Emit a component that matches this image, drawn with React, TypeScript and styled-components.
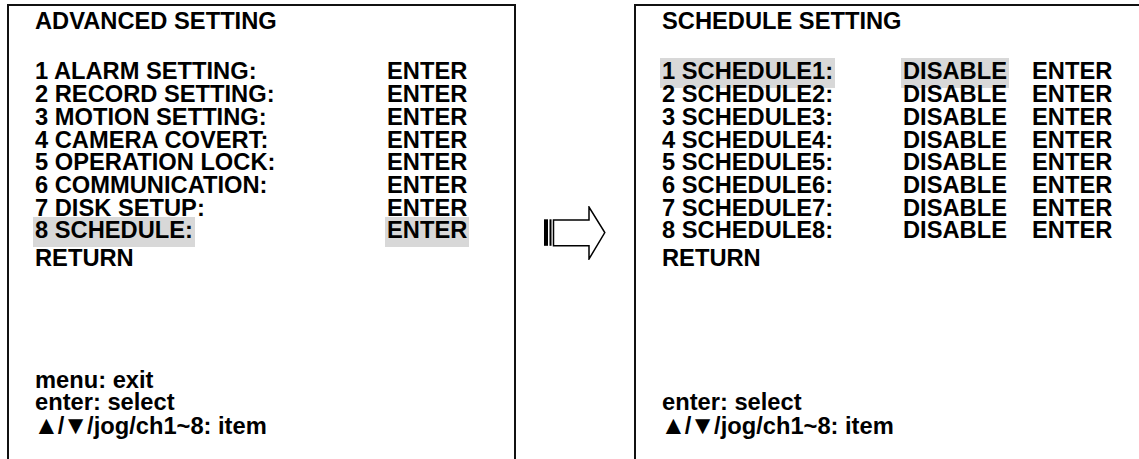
import React from "react";
import styled, { createGlobalStyle } from "styled-components";

const Global = createGlobalStyle`
  html, body { margin: 0; padding: 0; background: #ffffff; overflow: hidden; }
  body { font-family: "Liberation Sans", Arial, sans-serif; }
`;

const Page = styled.div`
  display: flex;
  align-items: flex-start;
  padding-left: 7px;
  height: 459px;
  overflow: hidden;
`;

const Panel = styled.section<{ $width: number; $open?: boolean }>`
  box-sizing: border-box;
  flex: none;
  width: ${(p) => p.$width}px;
  height: 480px;
  margin-top: 4px;
  border: 2px solid #111;
  border-bottom: none;
  ${(p) => (p.$open ? "border-right: none;" : "")}
  padding: 4.4px 0 46.4px 26px;
  display: flex;
  flex-direction: column;
  font-family: "Liberation Sans", Arial, sans-serif;
  font-weight: 700;
  font-size: 23.7px;
  line-height: 22.7px;
  color: #000;
  white-space: nowrap;
`;

const Title = styled.div`
  margin-bottom: 27.3px;
`;

const Menu = styled.div<{ $cols: string }>`
  display: grid;
  grid-template-columns: ${(p) => p.$cols};
`;

const Cell = styled.div``;

const Back = styled.div`
  margin-top: 5px;
`;

const Mark = styled.span<{ $on?: boolean }>`
  position: relative;
  z-index: 0;
  padding: 0 2px 4px;
  margin: 0 -2px;
  background: ${(p) => (p.$on ? "#d8d8d8" : "transparent")};
`;

const Help = styled.div`
  margin-top: auto;
`;

const Tri = styled.span`
  font-family: "Liberation Sans", Arial, sans-serif;
  font-size: 26px;
  margin: 0 -1.5px;
`;

const Gap = styled.div`
  flex: none;
  width: 118px;
  display: flex;
  justify-content: center;
  padding-top: 206px;
`;

const Arrow = () => (
  <svg width="62" height="54" viewBox="0 0 62 54" fill="none">
    <rect x="0" y="13.3" width="4" height="26.5" fill="#000" />
    <rect x="5.5" y="13.3" width="2" height="26.5" fill="#000" />
    <path
      d="M9.5 14 H45 V1 L60.8 26.6 L45 53 V39.7 H9.5 Z"
      stroke="#000"
      strokeWidth="1.5"
      strokeLinejoin="miter"
      fill="#fff"
    />
  </svg>
);

const advanced = [
  "1 ALARM SETTING:",
  "2 RECORD SETTING:",
  "3 MOTION SETTING:",
  "4 CAMERA COVERT:",
  "5 OPERATION LOCK:",
  "6 COMMUNICATION:",
  "7 DISK SETUP:",
  "8 SCHEDULE:",
];

const schedules = Array.from({ length: 8 }, (_, i) => `${i + 1} SCHEDULE${i + 1}:`);

const ItemHint = () => (
  <div>
    <Tri>▲</Tri>/<Tri>▼</Tri>/jog/ch1~8: item
  </div>
);

export default function App() {
  return (
    <>
      <Global />
      <Page>
        <Panel $width={509}>
          <Title>ADVANCED SETTING</Title>
          <Menu $cols="352px auto">
            {advanced.map((label, i) => (
              <React.Fragment key={label}>
                <Cell>
                  <Mark $on={i === 7}>{label}</Mark>
                </Cell>
                <Cell>
                  <Mark $on={i === 7}>ENTER</Mark>
                </Cell>
              </React.Fragment>
            ))}
          </Menu>
          <Back>RETURN</Back>
          <Help>
            <div>menu: exit</div>
            <div>enter: select</div>
            <ItemHint />
          </Help>
        </Panel>
        <Gap>
          <Arrow />
        </Gap>
        <Panel $width={540} $open>
          <Title>SCHEDULE SETTING</Title>
          <Menu $cols="241px 129px auto">
            {schedules.map((label, i) => (
              <React.Fragment key={label}>
                <Cell>
                  <Mark $on={i === 0}>{label}</Mark>
                </Cell>
                <Cell>
                  <Mark $on={i === 0}>DISABLE</Mark>
                </Cell>
                <Cell>ENTER</Cell>
              </React.Fragment>
            ))}
          </Menu>
          <Back>RETURN</Back>
          <Help>
            <div>enter: select</div>
            <ItemHint />
          </Help>
        </Panel>
      </Page>
    </>
  );
}
